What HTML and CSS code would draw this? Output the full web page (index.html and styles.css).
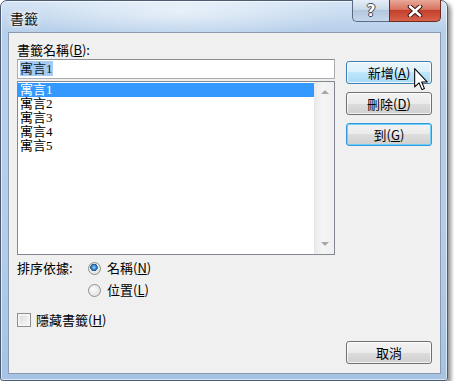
FILE: index.html
```html
<!doctype html>
<html lang="zh-Hant">

<head>
	<meta charset="UTF-8">
	<title>書籤</title>
	<link rel="stylesheet" href="styles.css">
</head>

<body>
	<div class="window">
		<div class="titlebar">
			<span class="title">書籤</span>
			<div class="caption-btns">
				<span class="cap help">?</span>
				<span class="cap close">
					<svg width="16" height="12" viewBox="0 0 16 12">
						<path d="M3 1.5 L13 10.5 M13 1.5 L3 10.5" stroke="#3b1510" stroke-width="4.6" stroke-linecap="round" />
						<path d="M3 1.5 L13 10.5 M13 1.5 L3 10.5" stroke="#fff" stroke-width="2.6" stroke-linecap="round" />
					</svg>
				</span>
			</div>
		</div>

		<div class="client">
			<div class="left">
				<div class="label">書籤名稱(<u>B</u>):</div>
				<div class="input"><span class="sel">寓言1</span></div>
				<div class="list">
					<div class="items">
						<div class="item selected">寓言1</div>
						<div class="item">寓言2</div>
						<div class="item">寓言3</div>
						<div class="item">寓言4</div>
						<div class="item">寓言5</div>
					</div>
					<div class="scroll">
						<span class="arrow up"></span>
						<span class="arrow down"></span>
					</div>
				</div>

				<div class="sort">
					<span class="sort-label">排序依據:</span>
					<div class="options">
						<div class="option"><span class="radio checked"></span>名稱(<u>N</u>)</div>
						<div class="option"><span class="radio"></span>位置(<u>L</u>)</div>
					</div>
				</div>

				<div class="option hidden-row"><span class="check"></span>隱藏書籤(<u>H</u>)</div>
			</div>

			<div class="right">
				<div class="btn hover">新增(<u>A</u>)
					<svg class="cursor" width="14" height="23" viewBox="0 0 12 20">
						<path d="M0.5 0.5 V16.5 L4.3 12.9 L6.8 18.8 L9 17.9 L6.6 12.2 H11.5 Z" fill="#fff" stroke="#000" stroke-width="0.9" stroke-linejoin="round" />
					</svg>
				</div>
				<div class="btn">刪除(<u>D</u>)</div>
				<div class="btn default">到(<u>G</u>)</div>
				<div class="btn cancel">取消</div>
			</div>
		</div>
	</div>
</body>

</html>
```

FILE: styles.css
```css
html,
body {
	margin: 0;
	background: #fff;
}

body {
	font-family: "Noto Sans CJK TC", sans-serif;
	font-size: 13px;
	color: #000;
}

u {
	text-decoration: underline;
}

.window {
	box-sizing: border-box;
	width: 448px;
	height: 381px;
	padding: 0 6px 6px 7px;
	border: 1px solid #4c5d73;
	border-radius: 7px 7px 3px 3px;
	background:
		radial-gradient(ellipse 160px 30px at 180px 10px, rgba(255, 255, 255, .55), transparent),
		linear-gradient(#d6e5f5, #b6cfea 31px, #b4cdea 60%, #a6c3e4);
	box-shadow: inset 0 0 0 1px rgba(255, 255, 255, .6), 3px 3px 4px rgba(0, 0, 0, .45);
}

.titlebar {
	display: flex;
	justify-content: space-between;
	align-items: flex-start;
	height: 31px;
}

.title {
	padding: 8px 0 0 2px;
	font-size: 14px;
	line-height: 18px;
	color: #111;
	text-shadow: 0 0 6px #fff, 0 0 3px #fff;
}

.caption-btns {
	display: flex;
	margin-top: -1px;
}

.cap {
	box-sizing: border-box;
	display: flex;
	align-items: center;
	justify-content: center;
	height: 22px;
	border: 1px solid #5a6a80;
	border-top: none;
}

.help {
	width: 37px;
	border-right: none;
	border-radius: 0 0 0 5px;
	background: linear-gradient(#e4edf7, #cad9ea 45%, #b3c7de 50%, #c7d8ec);
	font-family: "DejaVu Sans", sans-serif;
	font-weight: bold;
	font-size: 15px;
	color: #fff;
	text-shadow: 1px 0 0 #3a4658, -1px 0 0 #3a4658, 0 1px 0 #3a4658, 0 -1px 0 #3a4658;
}

.close {
	width: 52px;
	border-color: #6f2b22;
	border-radius: 0 0 5px 0;
	background: linear-gradient(#e9a99b, #d7735f 45%, #c4402c 50%, #d7624c);
}

.client {
	box-sizing: border-box;
	display: flex;
	gap: 11px;
	height: 342px;
	padding: 8px 7px 9px 8px;
	border: 1px solid #8a9bb0;
	background: #f0f0f0;
}

.left {
	width: 318px;
	display: flex;
	flex-direction: column;
}

.label {
	height: 17px;
	line-height: 17px;
	margin-bottom: 1px;
}

.input {
	box-sizing: border-box;
	height: 20px;
	padding: 1px 2px;
	border: 1px solid #abadb3;
	border-top-color: #8e8f8f;
	background: #fff;
	font-family: "Liberation Serif", "Noto Sans CJK TC", serif;
	line-height: 16px;
}

.sel {
	background: #a6cbf2;
	color: #101828;
}

.list {
	box-sizing: border-box;
	display: flex;
	height: 174px;
	margin-top: 2px;
	border: 1px solid #828790;
	background: #fff;
}

.items {
	flex: 1;
	padding-top: 1px;
	font-family: "Liberation Serif", "Noto Sans CJK TC", serif;
}

.item {
	height: 14px;
	line-height: 14px;
	padding-left: 2px;
}

.selected {
	background: #3399ff;
	color: #fff;
}

.scroll {
	position: relative;
	width: 19px;
	border-left: 1px solid #e6e6e6;
	background: linear-gradient(90deg, #ebebeb, #f5f5f5 40%, #f0f0f0);
}

.arrow {
	position: absolute;
	left: 6px;
	width: 0;
	height: 0;
	border-left: 4px solid transparent;
	border-right: 4px solid transparent;
}

.up {
	top: 8px;
	border-bottom: 4px solid #a8a8a8;
}

.down {
	bottom: 8px;
	border-top: 4px solid #a8a8a8;
}

.sort {
	display: flex;
	margin-top: 5px;
}

.sort-label {
	width: 71px;
	line-height: 16px;
}

.options {
	display: flex;
	flex-direction: column;
	gap: 6px;
}

.option {
	display: flex;
	align-items: center;
	height: 16px;
	line-height: 16px;
}

.radio {
	box-sizing: border-box;
	width: 13px;
	height: 13px;
	margin-right: 6px;
	border: 1px solid #8e8f8f;
	border-radius: 50%;
	background: radial-gradient(circle at 40% 40%, #fdfdfd, #d8d8d8);
}

.radio.checked {
	background:
		radial-gradient(circle at 45% 40%, #9ad6fa 0, #2c7dc4 2.5px, #1a4f86 3.5px, transparent 4px),
		radial-gradient(circle at 40% 40%, #fdfdfd, #d8d8d8);
}

.hidden-row {
	margin-top: 14px;
}

.check {
	box-sizing: border-box;
	width: 14px;
	height: 14px;
	margin-right: 5px;
	border: 1px solid #8e8f8f;
	background: linear-gradient(135deg, #d8d8d8, #fafafa);
	box-shadow: inset 0 0 0 2px #f4f4f4;
}

.right {
	width: 86px;
	display: flex;
	flex-direction: column;
	gap: 8px;
	padding-top: 20px;
}

.btn {
	position: relative;
	box-sizing: border-box;
	height: 23px;
	line-height: 21px;
	text-align: center;
	border: 1px solid #707070;
	border-radius: 3px;
	background: linear-gradient(#f2f2f2, #ebebeb 50%, #dddddd 50%, #cfcfcf);
	box-shadow: inset 0 0 0 1px rgba(255, 255, 255, .75);
}

.btn.hover {
	border-color: #3c7fb1;
	background: linear-gradient(#eaf6fd, #d9f0fc 50%, #bee6fd 50%, #a7d9f5);
}

.btn.default {
	border-color: #3399dd;
	box-shadow: inset 0 0 0 1px #6fd0f6;
}

.btn.cancel {
	margin-top: auto;
}

.cursor {
	position: absolute;
	left: 67px;
	top: 6px;
}
```
